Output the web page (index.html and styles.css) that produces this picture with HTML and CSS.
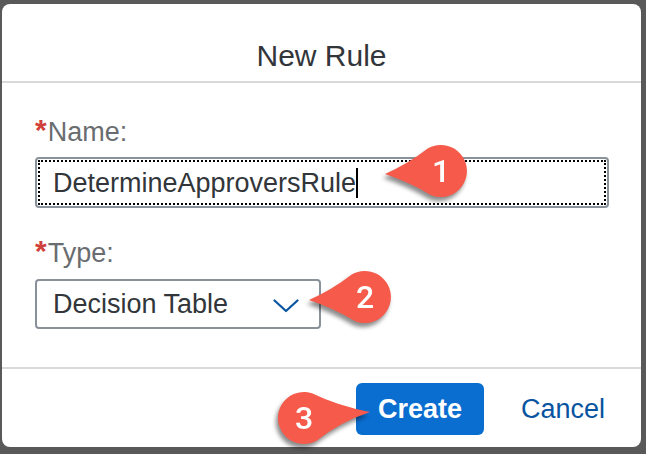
FILE: index.html
```html
<!DOCTYPE html>
<html lang="en">
<head>
<meta charset="utf-8">
<title>New Rule</title>
<link rel="stylesheet" href="styles.css">
</head>
<body>
<div class="dialog">
  <header class="dialog-header">
    <h1 class="dialog-title">New Rule</h1>
  </header>
  <main class="dialog-body">
    <label class="field-label"><span class="req">*</span>Name:</label>
    <div class="input focused"><span class="input-text">DetermineApproversRule</span><span class="caret"></span></div>
    <label class="field-label type-label"><span class="req">*</span>Type:</label>
    <div class="select">
      <span class="input-text">Decision Table</span>
      <svg class="chevron" width="26" height="14" viewBox="0 0 26 14"><path d="M1.5 1.5 L13 12 L24.5 1.5" fill="none" stroke="#0854a0" stroke-width="2.2" stroke-linecap="round" stroke-linejoin="round"/></svg>
    </div>
  </main>
  <footer class="dialog-footer">
    <button class="btn-primary">Create</button>
    <button class="btn-link">Cancel</button>
  </footer>

  <svg class="callout callout-1" width="90" height="66" viewBox="0 0 90 66">
    <path d="M4 33 Q27 23 46.7 7.6 A26 26 0 1 1 49.2 53.7 Q28 41 4 33 Z" fill="#f55a4a"/>
    <text x="60" y="41" class="callout-num" text-anchor="middle">1</text>
  </svg>
  <svg class="callout callout-2" width="90" height="66" viewBox="0 0 90 66">
    <path d="M4 33 Q27 23 46.7 7.6 A26 26 0 1 1 49.2 53.7 Q28 41 4 33 Z" fill="#f55a4a"/>
    <text x="60" y="41" class="callout-num" text-anchor="middle">2</text>
  </svg>
  <svg class="callout callout-3" width="102" height="66" viewBox="0 0 102 66">
    <path d="M98 24 Q66 18 40 5.3 A26 26 0 1 0 44.3 52.9 Q68 34 98 24 Z" fill="#f55a4a"/>
    <text x="32" y="41" class="callout-num" text-anchor="middle">3</text>
  </svg>
</div>
</body>
</html>
```

FILE: styles.css
```css
* { box-sizing: border-box; }

html, body {
  margin: 0;
  padding: 0;
}

body {
  width: 646px;
  height: 454px;
  background: #595959;
  padding: 4px 0 0 2px;
  font-family: "Liberation Sans", Arial, sans-serif;
  color: #32363a;
  overflow: hidden;
}

.dialog {
  position: relative;
  width: 639px;
  height: 443px;
  background: #ffffff;
  border-radius: 8px;
  display: flex;
  flex-direction: column;
}

.dialog-header {
  height: 79px;
  border-bottom: 2px solid #d9d9d9;
  display: flex;
  justify-content: center;
  padding-top: 34px;
}

.dialog-title {
  margin: 0;
  font-size: 30px;
  font-weight: normal;
  line-height: 36px;
  color: #32363a;
}

.dialog-body {
  flex: 1;
  padding: 33px 32px 0 33px;
  display: flex;
  flex-direction: column;
  align-items: flex-start;
}

.field-label {
  font-size: 27px;
  line-height: 32px;
  color: #6a6d70;
  display: flex;
  align-items: flex-start;
}

.req {
  color: #d0403a;
  font-weight: bold;
  font-size: 30px;
  line-height: 28px;
  margin-right: 1px;
}

.type-label {
  margin-top: 29px;
}

.input {
  margin-top: 9px;
  width: 574px;
  height: 51px;
  border: 2px solid #89919a;
  border-radius: 4px;
  display: flex;
  align-items: center;
  padding-left: 16px;
}

.input.focused {
  outline: 2px dotted #000;
  outline-offset: -5px;
}

.input-text {
  font-size: 27px;
  line-height: 32px;
  color: #32363a;
}

.caret {
  display: inline-block;
  width: 2px;
  height: 30px;
  background: #000;
  margin-left: 0;
}

.select {
  margin-top: 10px;
  width: 286px;
  height: 50px;
  border: 2px solid #89919a;
  border-radius: 4px;
  display: flex;
  align-items: center;
  justify-content: space-between;
  padding: 0 20px 0 16px;
}

.chevron {
  display: block;
  margin-top: 4px;
}

.dialog-footer {
  height: 80px;
  border-top: 2px solid #d9d9d9;
  display: flex;
  justify-content: flex-end;
  align-items: center;
  gap: 37px;
  padding: 2px 36px 0 0;
}

.btn-primary {
  width: 128px;
  height: 52px;
  border: none;
  border-radius: 6px;
  background: #0a6ed1;
  color: #ffffff;
  font-family: "Liberation Sans", Arial, sans-serif;
  font-weight: bold;
  font-size: 27px;
  padding: 0;
}

.btn-link {
  border: none;
  background: none;
  padding: 0;
  color: #0854a0;
  font-family: "Liberation Sans", Arial, sans-serif;
  font-size: 27px;
}

.callout {
  position: absolute;
  overflow: visible;
  filter: drop-shadow(-2px 4px 2px rgba(0, 0, 0, 0.45));
}

.callout-1 { left: 379px; top: 137px; }
.callout-2 { left: 303px; top: 263px; }
.callout-3 { left: 270px; top: 384px; }

.callout-num {
  font-family: Roboto, "Liberation Sans", sans-serif;
  font-weight: 500;
  font-size: 32px;
  fill: #ffffff;
}
```
